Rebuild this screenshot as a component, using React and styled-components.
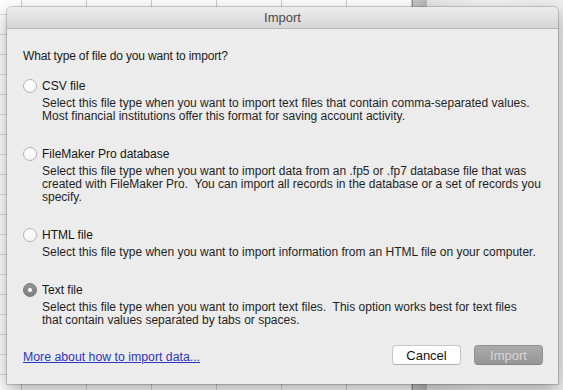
import React from 'react';
import styled, { createGlobalStyle } from 'styled-components';

const GlobalStyle = createGlobalStyle`
  html, body {
    margin: 0;
    padding: 0;
  }
  body {
    width: 563px;
    height: 390px;
    overflow: hidden;
    font-family: "Liberation Sans", Arial, sans-serif;
    -webkit-font-smoothing: antialiased;
  }
`;

// the spreadsheet window behind the sheet
const Desktop = styled.div`
  position: relative;
  display: flex;
  width: 563px;
  height: 390px;
  overflow: hidden;
`;

const Sheet = styled.div`
  width: 412px;
  background-color: #fff;
  background-image:
    linear-gradient(to right, #cfcfcf 1px, transparent 1px),
    linear-gradient(to bottom, #dedede 1px, transparent 1px);
  background-size: 65px 100%, 100% 20px;
  background-position: 21px 0, 0 14px;
`;

const ScrollTrack = styled.div`
  width: 14px;
  border-left: 1px solid #8f8f8f;
  background: linear-gradient(to right, #c9c9c9, #b9b9b9);
`;

const SidePanel = styled.div`
  flex: 1;
  background: linear-gradient(to right, #e6e6e6, #f4f4f4 40%, #efefef);
`;

// modal sheet lying over the window
const Dialog = styled.div`
  position: absolute;
  left: 7px;
  top: 7px;
  width: 551px;
  height: 377px;
  box-sizing: border-box;
  display: flex;
  flex-direction: column;
  background: #ececec;
  border-radius: 5px 5px 0 0;
  box-shadow: 0 0 0 1px rgba(0, 0, 0, 0.16), 0 6px 18px rgba(0, 0, 0, 0.35);
  overflow: hidden;
`;

const TitleBar = styled.div`
  height: 21px;
  flex: none;
  display: flex;
  align-items: center;
  justify-content: center;
  background: linear-gradient(#ececec, #d6d6d6);
  border-bottom: 1px solid #b6b6b6;
  font-size: 13px;
  color: #4a4a4a;
`;

const Body = styled.div`
  padding: 20px 14px 0 16px;
`;

const Question = styled.p`
  margin: 0 0 16px;
  font-size: 12px;
  letter-spacing: -0.15px;
  line-height: 14px;
  color: #1a1a1a;
`;

const OptionList = styled.div`
  display: flex;
  flex-direction: column;
  gap: 24px;
`;

const Option = styled.label`
  display: grid;
  grid-template-columns: 14px 1fr;
  column-gap: 5px;
  row-gap: 4px;
  align-items: center;
`;

const Radio = styled.span`
  width: 14px;
  height: 14px;
  box-sizing: border-box;
  border-radius: 50%;
  display: flex;
  align-items: center;
  justify-content: center;
  border: 1px solid ${p => (p.$checked ? '#777' : '#b3b3b3')};
  background: ${p =>
    p.$checked
      ? 'linear-gradient(#959595, #7f7f7f)'
      : 'linear-gradient(#ffffff, #f6f6f6)'};

  &::after {
    content: '';
    display: ${p => (p.$checked ? 'block' : 'none')};
    width: 4px;
    height: 4px;
    border-radius: 50%;
    background: #fff;
  }
`;

const OptionLabel = styled.span`
  font-size: 12px;
  line-height: 14px;
  color: #141414;
`;

const Desc = styled.span`
  grid-column: 2;
  font-size: 12px;
  line-height: 13px;
  color: #1f1f1f;
  white-space: nowrap;
`;

const Footer = styled.div`
  margin-top: auto;
  display: flex;
  align-items: center;
  justify-content: space-between;
  padding: 0 15px 19px 16px;
`;

const HelpLink = styled.a`
  font-size: 12.3px;
  color: #2b35c4;
  text-decoration: underline;
  margin-top: 4px;
`;

const Buttons = styled.div`
  display: flex;
  gap: 13px;
`;

const Button = styled.button`
  width: 69px;
  height: 20px;
  padding: 0;
  border-radius: 4px;
  font-family: inherit;
  font-size: 13px;
  border: 1px solid ${p => (p.$disabled ? '#939393' : '#c6c6c6')};
  border-bottom-color: ${p => (p.$disabled ? '#858585' : '#adadad')};
  background: ${p => (p.$disabled ? 'linear-gradient(#aaaaaa, #969696)' : '#ffffff')};
  color: ${p => (p.$disabled ? '#d8d8d8' : '#111')};
`;

const options = [
  {
    label: 'CSV file',
    lines: [
      'Select this file type when you want to import text files that contain comma-separated values.',
      'Most financial institutions offer this format for saving account activity.',
    ],
  },
  {
    label: 'FileMaker Pro database',
    lines: [
      'Select this file type when you want to import data from an .fp5 or .fp7 database file that was',
      'created with FileMaker Pro.\u00a0 You can import all records in the database or a set of records you',
      'specify.',
    ],
  },
  {
    label: 'HTML file',
    lines: ['Select this file type when you want to import information from an HTML file on your computer.'],
  },
  {
    label: 'Text file',
    checked: true,
    lines: [
      'Select this file type when you want to import text files.\u00a0 This option works best for text files',
      'that contain values separated by tabs or spaces.',
    ],
  },
];

export default function App() {
  return (
    <>
      <GlobalStyle />
      <Desktop>
        <Sheet />
        <ScrollTrack />
        <SidePanel />

        <Dialog>
          <TitleBar>Import</TitleBar>
          <Body>
            <Question>What type of file do you want to import?</Question>
            <OptionList>
              {options.map(opt => (
                <Option key={opt.label}>
                  <Radio $checked={opt.checked} />
                  <OptionLabel>{opt.label}</OptionLabel>
                  <Desc>
                    {opt.lines.map((line, i) => (
                      <React.Fragment key={i}>
                        {i > 0 && <br />}
                        {line}
                      </React.Fragment>
                    ))}
                  </Desc>
                </Option>
              ))}
            </OptionList>
          </Body>
          <Footer>
            <HelpLink href="#">More about how to import data...</HelpLink>
            <Buttons>
              <Button>Cancel</Button>
              <Button $disabled>Import</Button>
            </Buttons>
          </Footer>
        </Dialog>
      </Desktop>
    </>
  );
}
